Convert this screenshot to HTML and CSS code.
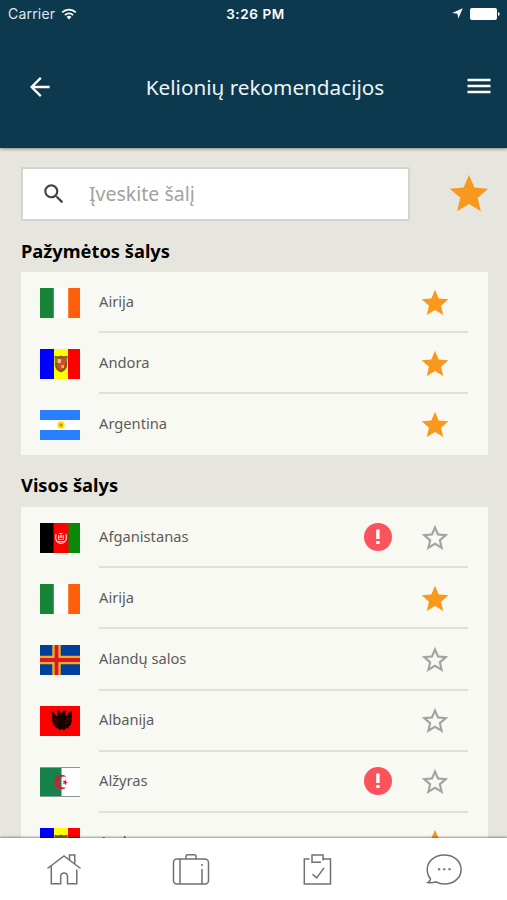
FILE: index.html
```html
<!DOCTYPE html>
<html lang="lt">
<head>
<meta charset="utf-8">
<title>Kelionių rekomendacijos</title>
<link rel="stylesheet" href="styles.css">
</head>
<body>
<svg class="defs" width="0" height="0">
  <symbol id="star" viewBox="0 0 24 24"><path fill="#f8981d" d="M12 17.27 18.18 21l-1.64-7.03L22 9.24l-7.19-.61L12 2 9.19 8.63 2 9.24l5.46 4.73L5.82 21z"/></symbol>
  <symbol id="star-o" viewBox="0 0 24 24"><path fill="#a3a3a1" d="m22 9.24-7.19-.62L12 2 9.19 8.63 2 9.24l5.46 4.73L5.82 21 12 17.27 18.18 21l-1.63-7.03L22 9.24zM12 15.4l-3.76 2.27 1-4.28-3.32-2.88 4.38-.38L12 6.1l1.71 4.04 4.38.38-3.32 2.88 1 4.28L12 15.4z"/></symbol>
  <symbol id="warn" viewBox="0 0 28 28"><circle cx="14" cy="14" r="14" fill="#fb535c"/><path fill="#fff" d="M12.2 6.6h3.4V16h-3.4zM12.2 18h3.4v3h-3.4z"/></symbol>
  <symbol id="ie" viewBox="0 0 40 30"><path fill="#fff" d="M0 0h40v30H0z"/><path fill="#168436" d="M0 0h13.8v30H0z"/><path fill="#ff5f0a" d="M28.2 0H40v30H28.2z"/></symbol>
  <symbol id="ad" viewBox="0 0 40 30"><path fill="#ff0" d="M0 0h40v30H0z"/><path fill="#0000fe" d="M0 0h14v30H0z"/><path fill="#fe0000" d="M28 0h12v30H28z"/><path fill="#8d7a18" d="M14.500 6.500q3 2 6.500 0 3.500 2 6.500 0l-.5 11q-1 4.500-6 6-5-1.500-6-6z"/><path fill="#d64a22" d="M17 9h8v9q-1 3-4 4-3-1-4-4z"/><path fill="#efb58c" d="M17.500 10h3.500v4h-3.500zM21.500 16h2.500v3h-2.500z"/><path stroke="#3f5a16" fill="none" d="M15 8h12.500M16 13v5l5 4.500 5-4.500v-5"/></symbol>
  <symbol id="ar" viewBox="0 0 40 30"><path fill="#fff" d="M0 0h40v30H0z"/><path fill="#2a7fff" d="M0 0h40v10H0zM0 20h40v10H0z"/><circle cx="21" cy="15" r="3.800" fill="#ffe51c"/><circle cx="21" cy="15" r="1.800" fill="#d89018"/></symbol>
  <symbol id="af" viewBox="0 0 40 30"><path fill="#fe0000" d="M0 0h40v30H0z"/><path d="M0 0h13.500v30H0z"/><path fill="#098a09" d="M28.500 0H40v30H28.500z"/><g fill="none" stroke="#ffc4c0"><path d="M16 11q-2 8 5 9.500 7-1.500 5-9.500" stroke-width="1.400"/><path d="M18.500 12v4.500h5V12M17.800 18.500h6.400M19 10.500h4"/></g><path fill="#ffb5b0" d="M19.300 15q0-3 1.700-4 1.700 1 1.700 4z"/></symbol>
  <symbol id="ax" viewBox="0 0 40 30"><path fill="#003f9b" d="M0 0h40v30H0z"/><path stroke="#f7ad1d" stroke-width="8.400" d="M16.500 0v30M0 15h40"/><path stroke="#d8172c" stroke-width="3.800" d="M16.500 0v30M0 15h40"/></symbol>
  <symbol id="al" viewBox="0 0 40 30"><path fill="#fe0000" d="M0 0h40v30H0z"/><path fill="#180300" d="m10.500 5 3.500 1.500L15 9l2 1V6l-1-1 3-.5 2.200 3L23.500 4.500l3 .5-1 1v4l2-1 .5-2 4-2-.3 4 .3 2-.5 2 .5 2-1 2v2l-2 1-.5 2.500-2-.5-2 2h-1l-1.500-1-1.500 1h-1l-2-2-2 .5-.5-2.500-2-1v-2l-1-2 .5-2-.5-2 .3-2z"/><path stroke="#900" stroke-width=".7" d="m14 12 4 3m-4 0 4 3m11-6-4 3m4 0-4 3"/></symbol>
  <symbol id="dz" viewBox="0 0 40 30"><path fill="#fff" d="M0 0h40v30H0z"/><path fill="#178249" d="M0 0h21.500v30H0z"/><path stroke="#8d968f" d="M0 .5h40M0 29.500h40"/><path fill="#d51c36" d="M26.500 10a7 7.300 0 1 0 0 10 5.400 5.600 0 1 1 0-10zM26 12.200l-1.300 1.900-2-.4 1.200 1.700-1.200 1.700 2-.5L26 18.500l.1-2.300 1.900-.8-1.900-.7z"/></symbol>
</svg>

<header class="header">
  <div class="status">
    <div class="carrier">Carrier
      <svg width="16" height="12" viewBox="0 0 16 12"><g fill="none" stroke="#fff" stroke-width="1.700"><path d="M1.200 4.400a9.600 9.600 0 0 1 13.600 0"/><path d="M3.900 7.100a5.800 5.800 0 0 1 8.200 0"/></g><path fill="#fff" d="M5.600 8.900a3.400 3.400 0 0 1 4.800 0L8 11.400z"/></svg>
    </div>
    <div class="time">3:26 PM</div>
    <div class="indicators">
      <svg width="11" height="11" viewBox="0 0 11 11"><path fill="#fff" d="M10.800.2 6.300 10.500 5.500 5.700.2 5z"/></svg>
      <svg width="30" height="12" viewBox="0 0 30 12"><rect width="27" height="12" rx="2" fill="#fff"/><path fill="#fff" d="M28 4q1.700.4 1.700 2T28 8z"/></svg>
    </div>
  </div>
  <div class="toolbar">
    <svg width="20" height="20" viewBox="0 0 20 20"><path d="M10.800.9 1.600 10l9.200 9.100M1.600 10h18" fill="none" stroke="#fff" stroke-width="2.300"/></svg>
    <h1>Kelionių rekomendacijos</h1>
    <svg width="24" height="17" viewBox="0 0 24 17"><path d="M.5 2h23M.5 8h23M.5 14h23" stroke="#fff" stroke-width="2.500"/></svg>
  </div>
</header>

<main class="content">
  <div class="search">
    <div class="field">
      <svg width="26" height="26" viewBox="0 0 24 24"><path fill="#444547" d="M15.500 14h-.79l-.28-.27A6.470 6.470 0 0 0 16 9.500 6.500 6.500 0 1 0 9.500 16c1.610 0 3.090-.59 4.230-1.570l.27.28v.79l5 4.990L20.490 19l-4.990-5zm-6 0C7.010 14 5 11.990 5 9.500S7.010 5 9.500 5 14 7.010 14 9.500 11.990 14 9.500 14z"/></svg>
      <span>Įveskite šalį</span>
    </div>
    <svg class="big-star"><use href="#star"/></svg>
  </div>

  <h2>Pažymėtos šalys</h2>
  <ul class="card">
    <li><svg class="flag"><use href="#ie"/></svg><div class="row"><span>Airija</span><svg class="star"><use href="#star"/></svg></div></li>
    <li><svg class="flag"><use href="#ad"/></svg><div class="row"><span>Andora</span><svg class="star"><use href="#star"/></svg></div></li>
    <li><svg class="flag"><use href="#ar"/></svg><div class="row"><span>Argentina</span><svg class="star"><use href="#star"/></svg></div></li>
  </ul>

  <h2>Visos šalys</h2>
  <ul class="card">
    <li><svg class="flag"><use href="#af"/></svg><div class="row"><span>Afganistanas</span><svg class="warn"><use href="#warn"/></svg><svg class="star"><use href="#star-o"/></svg></div></li>
    <li><svg class="flag"><use href="#ie"/></svg><div class="row"><span>Airija</span><svg class="star"><use href="#star"/></svg></div></li>
    <li><svg class="flag"><use href="#ax"/></svg><div class="row"><span>Alandų salos</span><svg class="star"><use href="#star-o"/></svg></div></li>
    <li><svg class="flag"><use href="#al"/></svg><div class="row"><span>Albanija</span><svg class="star"><use href="#star-o"/></svg></div></li>
    <li><svg class="flag"><use href="#dz"/></svg><div class="row"><span>Alžyras</span><svg class="warn"><use href="#warn"/></svg><svg class="star"><use href="#star-o"/></svg></div></li>
    <li><svg class="flag"><use href="#ad"/></svg><div class="row"><span>Andora</span><svg class="star"><use href="#star"/></svg></div></li>
  </ul>
</main>

<nav class="tabs">
  <a><svg width="36" height="34" viewBox="0 0 36 34"><path d="M1.500 15.500 18 3l16.500 12.500M5.300 13v17.800h9.400v-7.500a3.400 3.400 0 0 1 6.800 0v7.500h9.300V16.500M23.500 6.800V2h5.300v9"/></svg></a>
  <a><svg width="38" height="34" viewBox="0 0 38 34"><rect x="1.500" y="6" width="35" height="25" rx="3.500"/><path d="M14 5.800V3.300q0-1.500 1.500-1.500h7q1.500 0 1.500 1.500v2.500M8 6v25M30 16v15M30 11v2"/></svg></a>
  <a><svg width="36" height="34" viewBox="0 0 36 34"><path d="M10.500 6H5.300v24.900h26.200V6h-7.800M22 9.200h-9V2h11v5.500M13.500 21.200l4.200 3.700 7.300-10"/></svg></a>
  <a><svg width="38" height="34" viewBox="0 0 38 34"><path d="M5.500 25.800C3.500 23.500 2.200 20 2.200 16.500 2.200 8.200 9.800 2 19.300 2s16.800 6.200 16.800 14.500S28.800 31 19.300 31c-3.500 0-6.200-.9-8.200-2.200-2.500 1-5 1.300-8.300.8 1.500-.8 2.500-2 2.700-3.800z"/><path class="dots" d="M13 16.200h2.200M18.200 16.200h2.200M23.400 16.200h2.200"/></svg></a>
</nav>
</body>
</html>
```

FILE: styles.css
```css
* { box-sizing: border-box; }

body {
  margin: 0;
  height: 900px;
  display: flex;
  flex-direction: column;
  overflow: hidden;
  background: #e6e6de;
  font-family: "Noto Sans", sans-serif;
}

svg { display: block; flex: none; }
.defs { position: absolute; }

.header {
  flex: none;
  height: 148px;
  background: #0d394e;
  color: #fff;
  box-shadow: 0 1px 3px rgba(60, 60, 40, .55);
}

.status {
  display: grid;
  grid-template-columns: 1fr auto 1fr;
  align-items: center;
  height: 27px;
  padding: 0 7px 0 8px;
  font: 14px Inter, sans-serif;
}

.carrier { display: flex; align-items: center; gap: 6px; color: #dfe8ee; letter-spacing: .2px; }
.time { padding-left: 3px; font-weight: 600; font-size: 13.5px; letter-spacing: .6px; }
.indicators { display: flex; justify-content: flex-end; align-items: center; gap: 7px; }

.toolbar {
  display: flex;
  align-items: center;
  justify-content: space-between;
  height: 119px;
  padding: 0 16px 0 30px;
}

h1 { margin: 0 0 0 13px; padding-top: 1px; font-size: 20.7px; font-weight: 400; color: #eef4f8; }

.content {
  flex: 1;
  min-height: 0;
  overflow: hidden;
  padding: 0 16px 0 21px;
  margin-top: 19px;
}

.search { display: flex; align-items: center; gap: 36px; height: 54px; }

.field {
  flex: none;
  display: flex;
  align-items: center;
  gap: 22px;
  width: 388.5px;
  height: 54px;
  padding: 0 18px;
  background: #fff;
  border: 2px solid #d3d5cf;
  border-radius: 2px;
  font-size: 19.5px;
  color: #a2a2a2;
}

.field span { padding-bottom: 1px; }
.big-star { width: 46px; height: 46px; }

h2 {
  height: 51px;
  margin: 0;
  padding-top: 4px;
  font-size: 18.3px;
  font-weight: 700;
  line-height: 52px;
  color: #000;
}

.card { width: 467px; margin: 0; padding: 0; list-style: none; background: #f9f9f3; }
.card + h2 { height: 52px; padding-top: 4px; }

.card li { display: flex; align-items: center; gap: 19px; height: 61.1px; padding: 0 20px 0 19px; }
.card li:last-child .row { border-color: transparent; }

.flag { width: 40px; height: 30px; }

.row {
  flex: 1;
  display: flex;
  align-items: center;
  height: 100%;
  padding-right: 17.5px;
  border-bottom: 2px solid #e0e0db;
  font-size: 14.7px;
  color: #5c5c5a;
}

.row span { flex: 1; padding-bottom: 2px; }
.star { width: 32px; height: 32px; margin-top: 2px; }
.warn { width: 28px; height: 28px; margin-right: 27px; }

.tabs {
  flex: none;
  position: relative;
  display: grid;
  grid-template-columns: repeat(4, 1fr);
  align-items: center;
  height: 62px;
  padding: 2px 0 0 1px;
  background: #fff;
  box-shadow: 0 -1px 2px rgba(0, 0, 0, .4);
}

.tabs a { display: flex; justify-content: center; }
.tabs svg { fill: none; stroke: #707070; stroke-width: 1.5; }
.tabs .dots { stroke-width: 2; }
```
